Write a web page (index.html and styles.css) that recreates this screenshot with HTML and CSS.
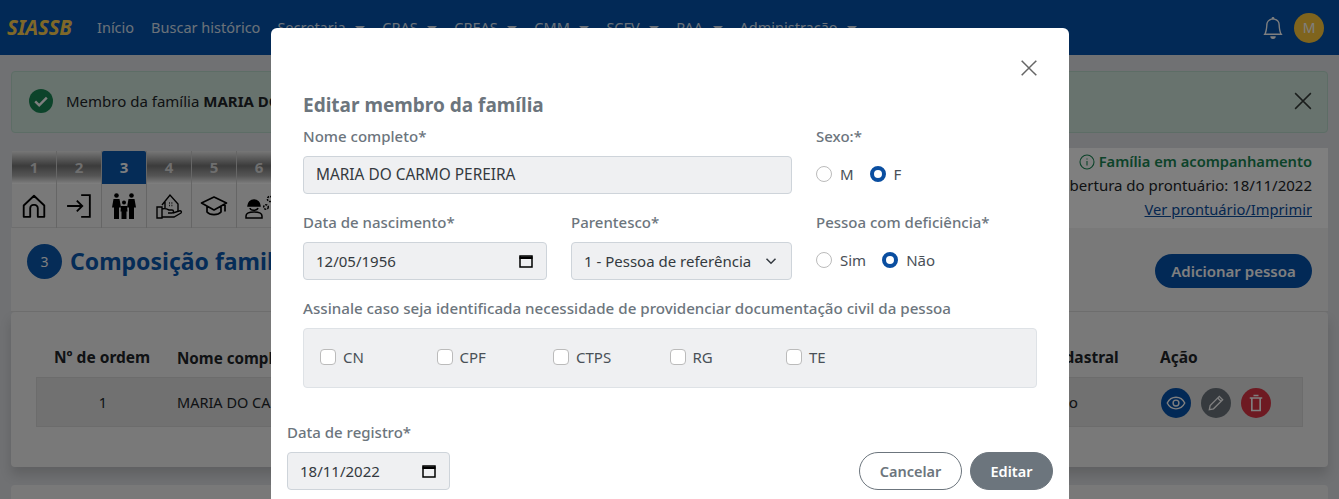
FILE: index.html
```html
<!DOCTYPE html>
<html lang="pt-BR">
<head>
<meta charset="utf-8">
<title>SIASSB</title>
<link rel="stylesheet" href="styles.css">
</head>
<body>
<header class="topbar">
  <span class="logo">SIASSB</span>
  <nav class="nav">
    <a class="nav-item">Início</a>
    <a class="nav-item">Buscar histórico</a>
    <a class="nav-item drop">Secretaria</a>
    <a class="nav-item drop">CRAS</a>
    <a class="nav-item drop">CREAS</a>
    <a class="nav-item drop">CMM</a>
    <a class="nav-item drop">SCFV</a>
    <a class="nav-item drop">PAA</a>
    <a class="nav-item drop">Administração</a>
  </nav>
  <div class="user">
    <svg class="bell" viewBox="0 0 16 16" width="22" height="22" fill="#fff"><path d="M8 16a2 2 0 0 0 2-2H6a2 2 0 0 0 2 2zM8 1.918l-.797.161A4 4 0 0 0 4 6c0 .628-.134 2.197-.459 3.742-.16.767-.376 1.566-.663 2.258h10.244c-.287-.692-.502-1.49-.663-2.258C12.134 8.197 12 6.628 12 6a4 4 0 0 0-3.203-3.92L8 1.917zM14.22 12c.223.447.481.801.78 1H1c.299-.199.557-.553.78-1C2.68 10.2 3 6.88 3 6c0-2.42 1.72-4.44 4.005-4.901a1 1 0 1 1 1.99 0A5 5 0 0 1 13 6c0 .88.32 4.2 1.22 6z"/></svg>
    <span class="avatar">M</span>
  </div>
</header>

<main class="page">
  <div class="alert">
    <svg class="alert-check" viewBox="0 0 24 24" width="24" height="24"><circle cx="12" cy="12" r="12" fill="#198754"/><path d="M6.2 12.4l4 4 7.6-7.8" fill="none" stroke="#fff" stroke-width="2.4"/></svg>
    <span class="alert-text">Membro da família <b>MARIA DO CARMO PEREIRA</b> editado com sucesso.</span>
    <svg class="alert-close" viewBox="0 0 16 16" width="18" height="18"><path d="M1 1l14 14M15 1L1 15" stroke="#000" stroke-opacity=".75" stroke-width="1.3"/></svg>
  </div>

  <div class="steps-row">
    <div class="steps">
      <div class="step"><span class="step-num">1</span><span class="step-icon"><svg viewBox="0 0 24 24" width="26" height="26" fill="none" stroke="#000" stroke-width="1.7" stroke-linejoin="round"><path d="M2.5 11.5L12 2.5l9.5 9V22h-6v-8a3 3 0 0 0-3-3h-1a3 3 0 0 0-3 3v8h-6z"/></svg></span></div>
      <div class="step"><span class="step-num">2</span><span class="step-icon"><svg viewBox="0 0 24 24" width="26" height="26" fill="none" stroke="#000" stroke-width="1.7"><path d="M1 12h14M10 7l5 5-5 5M14 2h8v20h-8"/></svg></span></div>
      <div class="step active"><span class="step-num">3</span><span class="step-icon"><svg viewBox="0 0 28 28" width="28" height="28" fill="#000"><circle cx="6.500" cy="3.500" r="2.300"/><circle cx="21.500" cy="3.500" r="2.300"/><circle cx="14" cy="10.500" r="2"/><path d="M3.500 7h6l1.500 8.500H9V27H4V15.500H2zM18.500 7h6L26 15.500h-2V27h-5V15.500h-2zM11 14h6l.5 5.500h-1V27h-5v-7.500h-1z"/></svg></span></div>
      <div class="step"><span class="step-num">4</span><span class="step-icon"><svg viewBox="0 0 28 28" width="28" height="28" fill="none" stroke="#000" stroke-width="1.4"><path d="M7 13l8-10 8 9v8M10 10v6"/><path d="M2 15h5v11H2zM7 17c3-1 5 0 7 1h3c2 0 2 3 0 3h-4M7 25h12l7-4c1-1 0-3-2-2l-6 2"/><path d="M14 11h.8M16.500 11h.8M14 13.500h.8M16.500 13.500h.8"/></svg></span></div>
      <div class="step"><span class="step-num">5</span><span class="step-icon"><svg viewBox="0 0 28 28" width="28" height="28" fill="none" stroke="#000" stroke-width="1.7" stroke-linejoin="round"><path d="M14 5L1.500 11 14 18l12.500-7zM7 14.500V20c3 3.500 11 3.500 14 0v-5.500M25 11.500v8"/></svg></span></div>
      <div class="step"><span class="step-num">6</span><span class="step-icon"><svg viewBox="0 0 30 28" width="30" height="28" fill="none" stroke="#000" stroke-width="1.5"><path d="M4 14a6 6 0 0 1 12 0z" fill="#000"/><path d="M6 16c.5 3 7 3 8 0"/><path d="M2 26v-2c0-3 3-4 8-4s8 1 8 4v2z"/><circle cx="22" cy="15" r="2.300" stroke-dasharray="2 1"/><circle cx="26" cy="7" r="2.600" stroke-dasharray="2 1"/></svg></span></div>
      <div class="step"><span class="step-num">7</span><span class="step-icon"></span></div>
    </div>
    <div class="status">
      <p class="status-line status-green"><svg viewBox="0 0 16 16" width="16" height="16" fill="none" stroke="#198754" stroke-width="1.100"><circle cx="8" cy="8" r="7"/><path d="M8 7v4.500M8 4.400v1.200"/></svg> Família em acompanhamento</p>
      <p class="status-line">Data de abertura do prontuário: 18/11/2022</p>
      <p class="status-line"><a class="status-link">Ver prontuário/Imprimir</a></p>
    </div>
  </div>

  <section class="title-card">
    <div class="title-left"><span class="badge">3</span><h1 class="title">Composição familiar</h1></div>
    <button class="btn-add">Adicionar pessoa</button>
  </section>

  <section class="table-card">
    <div class="tr th">
      <span class="c-ord">Nº de ordem</span><span class="c-name">Nome completo</span><span class="c-cad">Situação cadastral</span><span class="c-act">Ação</span>
    </div>
    <div class="tr td">
      <span class="c-ord center">1</span><span class="c-name">MARIA DO CARMO PEREIRA</span><span class="c-cad">Desatualizado</span>
      <span class="c-act actions">
        <span class="round blue"><svg viewBox="0 0 24 24" width="20" height="20" fill="none" stroke="#fff" stroke-width="1.700"><path d="M1.500 12C4 7 8 5 12 5s8 2 10.500 7C20 17 16 19 12 19s-8-2-10.500-7z"/><circle cx="12" cy="12" r="3.500"/></svg></span>
        <span class="round gray"><svg viewBox="0 0 24 24" width="20" height="20" fill="none" stroke="#fff" stroke-width="1.600"><path d="M4 20l1-5L16 4l4 4L9 19z"/><path d="M14 6l4 4"/></svg></span>
        <span class="round red"><svg viewBox="0 0 24 24" width="20" height="20" fill="none" stroke="#fff" stroke-width="2"><path d="M4.500 6h15M9 3h6M7 6v15h10V6"/></svg></span>
      </span>
    </div>
  </section>
  <section class="next-card"></section>
</main>

<div class="backdrop"></div>

<div class="modal" role="dialog">
  <div class="modal-top">
    <svg viewBox="0 0 16 16" width="18" height="18"><path d="M1.500 1.500l13 13M14.500 1.500l-13 13" stroke="#666" stroke-width="1.400"/></svg>
  </div>
  <div class="modal-body">
    <h2 class="modal-title">Editar membro da família</h2>
    <div class="form-grid">
      <div class="field span2">
        <label class="label">Nome completo*</label>
        <div class="control caps">MARIA DO CARMO PEREIRA</div>
      </div>
      <div class="field">
        <label class="label">Sexo:*</label>
        <div class="radios">
          <label class="radio"><input type="radio" name="sexo">M</label>
          <label class="radio"><input type="radio" name="sexo" checked>F</label>
        </div>
      </div>
      <div class="field">
        <label class="label">Data de nascimento*</label>
        <div class="control between">12/05/1956
          <svg class="cal" viewBox="0 0 16 16" width="16" height="16" fill="none" stroke="#000"><path d="M2 3h12v11H2z" stroke-width="1.500"/><path d="M1.500 3.500h13V6h-13z" fill="#000" stroke="none"/></svg>
        </div>
      </div>
      <div class="field">
        <label class="label">Parentesco*</label>
        <div class="control between select">1 - Pessoa de referência
          <svg viewBox="0 0 16 16" width="12" height="12" fill="none" stroke="#343a40" stroke-width="2"><path d="M2 5l6 6 6-6"/></svg>
        </div>
      </div>
      <div class="field">
        <label class="label">Pessoa com deficiência*</label>
        <div class="radios">
          <label class="radio"><input type="radio" name="pcd">Sim</label>
          <label class="radio"><input type="radio" name="pcd" checked>Não</label>
        </div>
      </div>
    </div>
    <label class="label doc-label">Assinale caso seja identificada necessidade de providenciar documentação civil da pessoa</label>
    <div class="doc-box">
      <label class="check"><input type="checkbox">CN</label>
      <label class="check"><input type="checkbox">CPF</label>
      <label class="check"><input type="checkbox">CTPS</label>
      <label class="check"><input type="checkbox">RG</label>
      <label class="check"><input type="checkbox">TE</label>
    </div>
  </div>
  <div class="modal-foot">
    <div class="reg">
      <label class="label">Data de registro*</label>
      <div class="control between">18/11/2022
        <svg class="cal" viewBox="0 0 16 16" width="16" height="16" fill="none" stroke="#000"><path d="M2 3h12v11H2z" stroke-width="1.500"/><path d="M1.500 3.500h13V6h-13z" fill="#000" stroke="none"/></svg>
      </div>
    </div>
    <div class="foot-btns">
      <button class="btn-cancel">Cancelar</button>
      <button class="btn-edit">Editar</button>
    </div>
  </div>
</div>
</body>
</html>
```
FILE: styles.css
```css
* { box-sizing: border-box; }
html, body { height: 100%; }
body {
  margin: 0;
  overflow: hidden;
  background: #e0e2e6;
  color: #212529;
  font: 400 15px/1.5 "Noto Sans", "Open Sans", sans-serif;
}
.topbar {
  display: flex;
  align-items: center;
  height: 55px;
  padding: 0 15px 0 7px;
  background: #0552ac;
}
.logo { width: 90px; color: #ffd052; font-size: 20.5px; font-weight: 700; font-style: italic; letter-spacing: -.2px; }
.nav { display: flex; flex: 1; gap: 17px; color: #d7e3f2; font-size: 14.5px; }
.nav-item { white-space: nowrap; }
.drop::after {
  content: "";
  display: inline-block;
  margin-left: 9.6px;
  vertical-align: 2px;
  border: 5px solid transparent;
  border-top-color: currentColor;
  border-bottom: 0;
}
.user { display: flex; align-items: center; gap: 10px; }
.avatar {
  display: flex; align-items: center; justify-content: center;
  width: 30px; height: 30px; border-radius: 50%;
  background: #ffc83a; color: #fff; font-size: 14px;
}
.page { padding: 16px 11px 0; }
.alert {
  display: flex; align-items: center;
  height: 62px;
  padding: 0 15px 2px 17px;
  background: #d1e7dd;
  border: 1px solid #badbcc;
  border-radius: 4px;
}
.alert-text { flex: 1; margin-left: 13px; }
.steps-row { display: flex; justify-content: space-between; margin-top: 15px; }
.steps { display: flex; margin-top: 3px; padding-left: 1px; }
.step { display: flex; flex-direction: column; width: 45px; border-right: 1px solid #ccc; }
.step-num {
  height: 33px; text-align: center; line-height: 33px;
  color: #ddd; font-weight: 700; font-size: 15px;
  background: linear-gradient(#eee 0, #777 45%, #aaa 75%, #fff 100%);
}
.active .step-num { background: #0a58ae; color: #fff; border-radius: 2px 2px 0 0; }
.step-icon { display: flex; align-items: center; justify-content: center; height: 44px; background: #f3f3f3; border-bottom: 1px solid #ddd; }
.status { flex: 1; height: 80px; padding: 1px 16px 0 0; background: #fff; text-align: right; }
.status-line { margin: 0; height: 24px; line-height: 24px; white-space: nowrap; }
.status-line svg { vertical-align: -3px; }
.status-green { color: #198754; font-weight: 600; font-size: 14.7px; }
.status-link { color: #0a4ea0; text-decoration: underline; font-size: 14.7px; }
.title-card {
  display: flex; align-items: center; justify-content: space-between;
  height: 84px;
  padding: 0 16px 16px;
  background: #f3f3f3;
  border-bottom: 1px solid #ddd;
}
.title-left { display: flex; align-items: center; gap: 8px; }
.badge {
  display: flex; align-items: center; justify-content: center;
  width: 35px; height: 35px; border-radius: 50%;
  background: #0a58ae; color: #fff; font-size: 14px;
}
.title { margin: 0; color: #0a58ae; font-size: 23px; font-weight: 700; }
.btn-add {
  height: 34px; width: 157px;
  margin-top: 18px;
  border: 0; border-radius: 17px;
  background: #0552ac; color: #fff;
  font: 600 15px "Noto Sans", sans-serif;
}
.table-card {
  height: 155px;
  padding: 30px 25px 0;
  background: #f3f3f3;
  border-radius: 4px;
  box-shadow: 0 8px 12px rgba(0,0,0,.15);
}
.tr { display: flex; align-items: center; }
.th { height: 35px; font-weight: 700; font-size: 15.5px; padding-bottom: 3px; }
.th .c-name { font-size: 15.2px; }
.td { height: 50px; padding-top: 1px; background: #e2e2e2; border: 1px solid #d8d8d8; font-size: 14.5px; }
.c-ord { width: 141px; padding-left: 18px; }
.center { width: 140px; padding: 0 8px 0 0; text-align: center; }
.c-name { width: 800px; }
.c-cad { width: 183px; }
.td .c-cad { font-size: 15.2px; }
.actions { display: flex; gap: 10px; margin-left: 1px; }
.round { display: flex; align-items: center; justify-content: center; width: 30px; height: 30px; border-radius: 50%; }
.blue { background: #0552ac; }
.gray { background: #6c757d; }
.red { background: #dc3545; }
.next-card { height: 60px; margin-top: 18px; background: #f3f3f3; border-radius: 4px; }

.backdrop { position: fixed; inset: 0; background: rgba(0,0,0,.5); }
.modal {
  position: absolute;
  top: 28px; left: 271px;
  width: 798px; height: 520px;
  background: #fff;
  border-radius: 6px;
  color: #343a40;
}
.modal-top { display: flex; justify-content: flex-end; padding: 31px 31px 0 0; height: 62px; }
.modal-body { padding: 0 32px; }
.modal-title { margin: 0; height: 32px; line-height: 30px; color: #6c757d; font-size: 19px; font-weight: 700; }
.label { display: block; color: #6c757d; font-weight: 500; height: 22px; line-height: 22px; white-space: nowrap; }
.form-grid { display: grid; grid-template-columns: 244px 221px 221px; column-gap: 24px; row-gap: 17px; margin-top: 3px; }
.span2 { grid-column: span 2; }
.field .label { margin-bottom: 9px; }
.control {
  height: 38px; padding: 0 12px;
  display: flex; align-items: center;
  background: #eff0f2;
  border: 1px solid #ced4da;
  border-radius: 4px;
  white-space: nowrap;
}
.caps { font-size: 15.4px; }
.between { justify-content: space-between; }
.select { padding-right: 14px; }
.radios { display: flex; gap: 16px; height: 38px; margin-top: -1px; align-items: center; }
.radio { display: flex; align-items: center; gap: 8px; color: #495057; }
.radio input, .check input {
  appearance: none; margin: 0; width: 16px; height: 16px;
  background: #fff; border: 1px solid #bbb;
}
.radio input { border-radius: 50%; }
.radio input:checked { border: 4.5px solid #0a4ea0; }
.doc-label { margin-top: 17px; font-size: 15.15px; }
.doc-box {
  display: flex; align-items: center;
  height: 60px; margin-top: 9px; padding: 0 16px 2px;
  background: #eff0f2;
  border: 1px solid #dee2e6;
  border-radius: 4px;
}
.check { display: flex; align-items: center; gap: 7px; width: 116.500px; color: #495057; }
.check input { border-radius: 4px; }
.modal-foot { display: flex; justify-content: space-between; align-items: flex-end; padding: 33px 16px 0; }
.reg { width: 163px; }
.reg .label { margin-bottom: 9px; }
.foot-btns { display: flex; gap: 8px; }
.btn-cancel, .btn-edit {
  height: 38px; border-radius: 19px;
  font: 600 14.5px "Noto Sans", sans-serif; color: #6c757d;
}
.btn-cancel { width: 103px; background: #fff; border: 1px solid #6c757d; }
.btn-edit { width: 83px; background: #6c757d; border: 1px solid #6c757d; color: #fff; }
```
